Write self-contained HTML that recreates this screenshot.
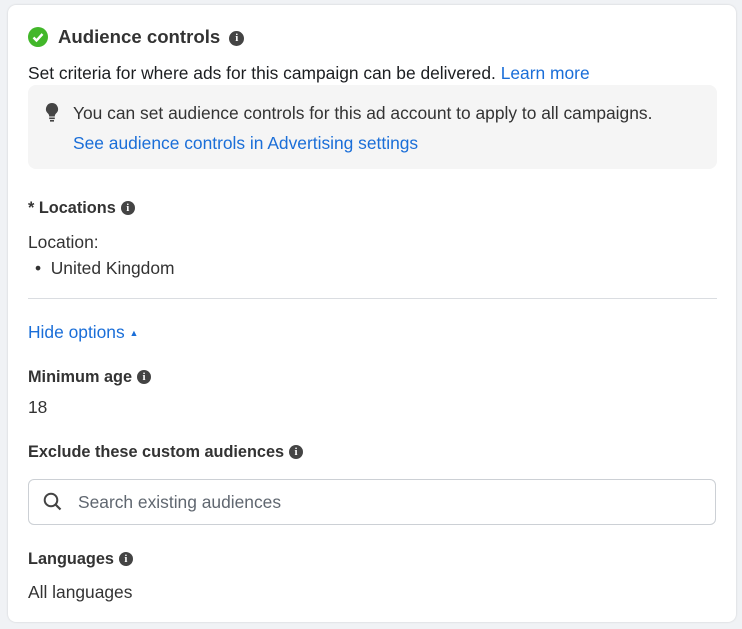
<!DOCTYPE html>
<html><head><meta charset="utf-8"><style>
body{margin:0;width:742px;height:629px;background:#f0f2f5;font-family:"Liberation Sans",sans-serif;color:#1c1e21;position:relative;overflow:hidden}
.card{position:absolute;left:8px;top:5px;width:728px;height:617px;background:#fff;border-radius:8px;box-shadow:0 0 2px rgba(0,0,0,.15)}
.a{position:absolute;white-space:nowrap;font-size:17.4px;line-height:20px}
.b{font-weight:bold;color:#333;font-size:16.3px}
.l{color:#1a6ed8}
.i{display:inline-block;width:14px;height:14px;border-radius:50%;background:#444;color:#fff;font-size:11px;font-weight:bold;text-align:center;line-height:14px;vertical-align:2px;margin-left:5px;font-family:"Liberation Serif",serif}
</style></head><body>
<div class="card"></div>
<svg class="a" style="left:28px;top:27px" width="20" height="20"><circle cx="10" cy="10" r="10" fill="#42b72a"/><path d="M5.5 10.5l3 3 6-6.5" stroke="#fff" stroke-width="2.4" fill="none"/></svg>
<div class="a b" style="left:58px;top:27px;font-size:18.6px;color:#333">Audience controls<span class="i" style="width:15px;height:15px;line-height:15px;margin-left:9px">i</span></div>
<div class="a" style="left:28px;top:63px">Set criteria for where ads for this campaign can be delivered. <span class="l">Learn more</span></div>
<div style="position:absolute;left:28px;top:85px;width:689px;height:84px;background:#f5f5f5;border-radius:8px"></div>
<svg class="a" style="left:45px;top:103px" width="14" height="19"><path d="M7 0a6 6 0 0 0-4 10.5c1 1 1.2 2 1.2 3h5.6c0-1 .2-2 1.2-3A6 6 0 0 0 7 0z" fill="#444"/><rect x="4.2" y="14.5" width="5.6" height="1.6" fill="#444"/><rect x="5" y="17" width="4" height="1.6" fill="#444"/></svg>
<div class="a" style="left:73px;top:103px;color:#333">You can set audience controls for this ad account to apply to all campaigns.</div>
<div class="a l" style="left:73px;top:133px">See audience controls in Advertising settings</div>
<div class="a b" style="left:28px;top:198px">* Locations<span class="i">i</span></div>
<div class="a" style="left:28px;top:232px;color:#333">Location:</div>
<div class="a" style="left:35px;top:258px;color:#333">•&nbsp;&nbsp;United Kingdom</div>
<div style="position:absolute;left:28px;top:298px;width:689px;height:1px;background:#dadde1"></div>
<div class="a l" style="left:28px;top:322px">Hide options <span style="font-size:9px;vertical-align:2px">▲</span></div>
<div class="a b" style="left:28px;top:367px">Minimum age<span class="i">i</span></div>
<div class="a" style="left:28px;top:397px;color:#333">18</div>
<div class="a b" style="left:28px;top:442px">Exclude these custom audiences<span class="i">i</span></div>
<div style="position:absolute;left:28px;top:479px;width:686px;height:44px;border:1px solid #ccd0d5;border-radius:6px"></div>
<svg class="a" style="left:43px;top:492px" width="20" height="20"><circle cx="8" cy="8" r="6.3" stroke="#444" stroke-width="2" fill="none"/><path d="M12.5 12.5l5 5" stroke="#444" stroke-width="2.2"/></svg>
<div class="a" style="left:78px;top:492px;color:#606770">Search existing audiences</div>
<div class="a b" style="left:28px;top:549px">Languages<span class="i">i</span></div>
<div class="a" style="left:28px;top:582px;color:#333">All languages</div>
</body></html>
